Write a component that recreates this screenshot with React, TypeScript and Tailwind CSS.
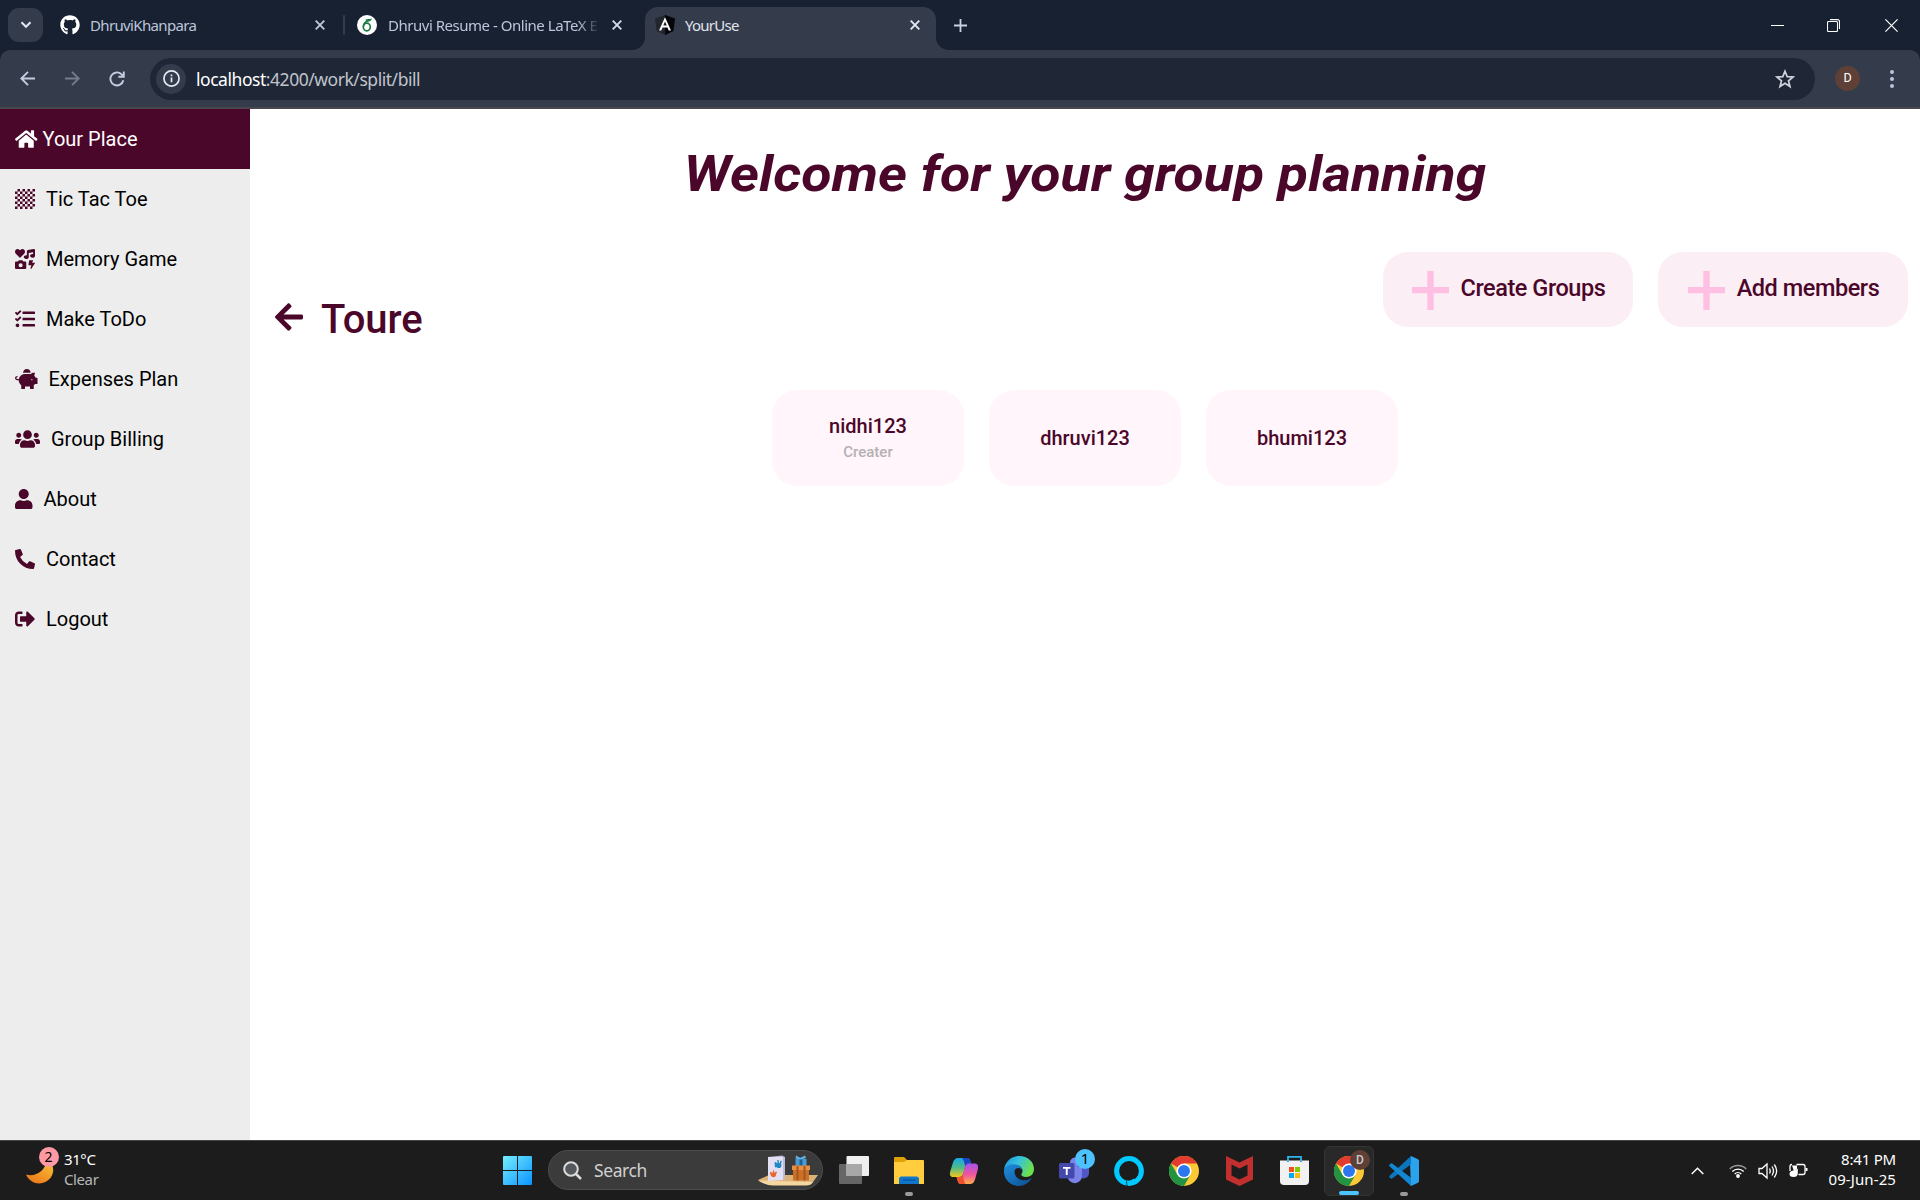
import React from "react";
import {
  FaHome,
  FaGithub,
  FaUsers,
  FaUser,
  FaPhoneAlt,
  FaIcons,
  FaChessBoard,
  FaTasks,
  FaPiggyBank,
  FaArrowLeft,
  FaSignOutAlt,
} from "react-icons/fa";

function Close({ className }: { className: string }) {
  return (
    <svg viewBox="0 0 10 10" className={"h-[10px] w-[10px] shrink-0 " + className} fill="none" stroke="currentColor" strokeWidth="1.9">
      <path d="M0.7 0.7 9.3 9.3M9.3 0.7 0.7 9.3" />
    </svg>
  );
}

function AngularLogo() {
  return (
    <svg viewBox="0 0 20 20" className="ml-[10px] h-5 w-5 shrink-0">
      <path d="M10 0 20 3.4 18.4 16 10 20 1.6 16 0 3.4Z" fill="#24262e" />
      <path d="M10 0 20 3.4 18.4 16 10 20Z" fill="#05060c" />
      <path d="M10 2.3 4 15.6h2.3l1.2-3h5l1.2 3H16ZM8.3 10.6 10 6.6l1.7 4Z" fill="#fff" />
    </svg>
  );
}

function OverleafLogo() {
  return (
    <svg viewBox="0 0 20 20" className="ml-3 h-5 w-5 shrink-0">
      <circle cx="10" cy="10" r="10" fill="#fff" />
      <ellipse cx="9.8" cy="12" rx="3.5" ry="3.8" fill="none" stroke="#1c7a43" strokeWidth="1.7" />
      <path d="M6.3 11.5C6.6 8 9 6 12.5 5.2" fill="none" stroke="#1c7a43" strokeWidth="1.6" />
      <path d="M8.2 4.7C10.5 3.5 13 4.6 15 3.2 14.6 6 12 6.8 9.5 6.2Z" fill="#1c7a43" />
    </svg>
  );
}

function TabStrip() {
  return (
    <div className="flex h-[50px] items-center bg-[#182131] text-[15px] text-[#bcc5da]">
      <div className="ml-2 flex h-[34px] w-[35px] items-center justify-center rounded-[11px] bg-[#343c4c]">
        <svg viewBox="0 0 12 8" className="h-2 w-3" fill="none" stroke="#e4e8f2" strokeWidth="2">
          <path d="M1.5 1.2 6 5.8 10.5 1.2" />
        </svg>
      </div>
      <FaGithub className="ml-[17px] h-5 w-5 shrink-0 text-white" />
      <span className="ml-[10px] w-[225px] whitespace-nowrap tracking-[-0.65px]">DhruviKhanpara</span>
      <Close className="text-[#bcc5da]" />
      <div className="ml-[18px] h-5 w-[2px] rounded bg-[#343c4c]" />
      <OverleafLogo />
      <span className="ml-[11px] w-[210px] whitespace-nowrap tracking-[-0.48px] [mask-image:linear-gradient(to_right,#000_190px,transparent_212px)]">
        Dhruvi Resume - Online LaTeX E
      </span>
      <Close className="ml-[14px] text-[#d5daea]" />
      <div className="relative ml-[23px] mt-[7px] flex h-[43px] w-[291px] items-center rounded-t-[13px] bg-[#343c4c] pb-[7px] text-[#e0e4ee]">
        <svg viewBox="0 0 13 13" className="absolute bottom-0 -left-[13px] h-[13px] w-[13px]"><path d="M13 0V13H0A13 13 0 0 0 13 0Z" fill="#343c4c" /></svg>
        <svg viewBox="0 0 13 13" className="absolute bottom-0 -right-[13px] h-[13px] w-[13px]"><path d="M0 0V13H13A13 13 0 0 1 0 0Z" fill="#343c4c" /></svg>
        <AngularLogo />
        <span className="ml-[10px] w-[225px] whitespace-nowrap tracking-[-0.75px]">YourUse</span>
        <Close className="text-[#e4e8f2]" />
      </div>
      <svg viewBox="0 0 13 13" className="ml-[18px] h-[13px] w-[13px]" stroke="#c8d0e4" strokeWidth="1.8"><path d="M6.5 0V13M0 6.5H13" /></svg>
      <div className="ml-auto flex items-center pr-[22px] text-white">
        <div className="h-px w-[13px] bg-white" />
        <svg viewBox="0 0 13 13" className="ml-[43px] h-[13px] w-[13px]" fill="none" stroke="#fff" strokeWidth="1.1">
          <rect x="0.5" y="2.5" width="10" height="10" rx="1" />
          <path d="M3 0.6H10.5a2 2 0 0 1 2 2V10" />
        </svg>
        <svg viewBox="0 0 13 13" className="ml-[45px] h-[13px] w-[13px]" stroke="#fff" strokeWidth="1.2"><path d="M0.4 0.4 12.6 12.6M12.6 0.4 0.4 12.6" /></svg>
      </div>
    </div>
  );
}

function Toolbar() {
  return (
    <div className="bg-[#182131]">
      <div className="flex h-[59px] items-center rounded-t-[10px] border-b-2 border-[#4a464e] bg-[#343c4c] text-[#c3cce0]">
        <svg viewBox="0 0 15 15" className="ml-5 h-[15px] w-[15px]" fill="none" stroke="currentColor" strokeWidth="1.9"><path d="M15 7.5H1.5M8 0.8 1.3 7.5 8 14.2" /></svg>
        <svg viewBox="0 0 15 15" className="ml-[30px] h-[15px] w-[15px] text-[#757d8d]" fill="none" stroke="currentColor" strokeWidth="1.9"><path d="M0 7.5H13.5M7 0.8 13.7 7.5 7 14.2" /></svg>
        <svg viewBox="0 0 16 16" className="ml-[29px] h-4 w-4" fill="none" stroke="currentColor" strokeWidth="1.9"><path d="M14.3 9.2A6.5 6.5 0 1 1 12.6 3.4L14 5M14.8 0.5V5.8H9.4" /></svg>
        <div className="ml-[25px] flex h-[42px] w-[1665px] items-center rounded-full bg-[#1f2737]">
          <div className="ml-[6px] flex h-[30px] w-[30px] items-center justify-center rounded-full bg-[#343c4c]">
            <svg viewBox="0 0 18 18" className="h-[17px] w-[17px]" fill="none" stroke="#e4e8f2" strokeWidth="1.8"><circle cx="9" cy="9" r="8" /><path d="M9 8V13M9 4.7V6.5" /></svg>
          </div>
          <div className="ml-[10px] whitespace-nowrap pt-[2px] text-[17.5px] tracking-[-0.46px] text-[#c0c4cb]"><span className="text-white">localhost</span>:4200/work/split/bill</div>
          <svg viewBox="0 0 20 20" className="ml-auto mr-5 h-5 w-5" fill="none" stroke="#cfd3dd" strokeWidth="1.7"><path d="M10 2.2 12.2 7.6 18 8 13.5 11.8 15 17.5 10 14.3 5 17.5 6.5 11.8 2 8 7.8 7.6Z" /></svg>
        </div>
        <div className="ml-5 flex h-[25px] w-[25px] items-center justify-center rounded-full bg-[#5e4037] font-[Roboto] text-[12.5px] text-white">D</div>
        <div className="ml-[30px] flex flex-col gap-[3px]">
          <i className="h-1 w-1 rounded-full bg-[#b9c4de]" />
          <i className="h-1 w-1 rounded-full bg-[#b9c4de]" />
          <i className="h-1 w-1 rounded-full bg-[#b9c4de]" />
        </div>
      </div>
    </div>
  );
}

const menu = [
  { label: "Tic Tac Toe", Icon: FaChessBoard, size: "w-5" },
  { label: "Memory Game", Icon: FaIcons, size: "w-5" },
  { label: "Make ToDo", Icon: FaTasks, size: "w-5" },
  { label: "Expenses Plan", Icon: FaPiggyBank, size: "w-[22.5px]" },
  { label: "Group Billing", Icon: FaUsers, size: "w-[25px]" },
  { label: "About", Icon: FaUser, size: "w-[17.5px]" },
  { label: "Contact", Icon: FaPhoneAlt, size: "w-5" },
  { label: "Logout", Icon: FaSignOutAlt, size: "w-5" },
];

function Sidebar() {
  return (
    <nav className="w-[250px] shrink-0 bg-[#ededed] text-[20px] text-black">
      <div className="flex h-[60px] items-center bg-[#4b0729] pl-[15px] text-white">
        <FaHome className="h-5 w-[22.5px]" />
        <span className="ml-[5px]">Your Place</span>
      </div>
      {menu.map(({ label, Icon, size }) => (
        <div key={label} className="flex h-[60px] items-center pl-[15px]">
          <Icon className={"h-5 shrink-0 text-[#4b0729] " + size} />
          <span className="ml-[11px]">{label}</span>
        </div>
      ))}
    </nav>
  );
}

function ActionButton({ label }: { label: string }) {
  return (
    <button className="flex h-[75px] w-[250px] items-center justify-center rounded-[25px] bg-[#fceef5] pl-px text-[#4b0729]">
      <svg viewBox="0 0 37 39" className="mt-[2px] h-[39px] w-[37px] shrink-0" fill="#ffbfe2"><path d="M15.3 0h6.4v39h-6.4zM0 16h37v6.2H0z" /></svg>
      <span className="ml-3 whitespace-nowrap pb-px text-[23.5px] font-medium tracking-[-0.45px]">{label}</span>
    </button>
  );
}

function Member({ name, role }: { name: string; role?: string }) {
  return (
    <div className="flex h-24 w-48 flex-col items-center justify-center rounded-[25px] bg-[#fff5fb]">
      <span className="text-[20px] leading-[24px] font-medium text-[#4b0729]">{name}</span>
      {role && <span className="mt-[5px] mb-[2px] text-[15px] leading-[18px] font-medium text-[#b5b0b3]">{role}</span>}
    </div>
  );
}

function Content() {
  return (
    <main className="flex flex-1 flex-col bg-white">
      <h1 className="mt-[35px] flex h-[60px] scale-x-[1.108] items-center justify-center whitespace-nowrap font-[Roboto] text-[50px] font-bold text-[#4b0729] italic">
        Welcome for your group planning
      </h1>
      <div className="mt-12 flex justify-end gap-[25px] pr-3">
        <div className="mr-auto ml-[25px] flex h-[47px] items-center self-end text-[#4b0729] -mb-[14px]">
          <FaArrowLeft className="mb-[2px] h-8 w-7" />
          <h2 className="ml-[18px] pt-[4px] text-[40px] font-medium">Toure</h2>
        </div>
        <ActionButton label="Create Groups" />
        <ActionButton label="Add members" />
      </div>
      <div className="mt-[63px] flex justify-center gap-[25px]">
        <Member name="nidhi123" role="Creater" />
        <Member name="dhruvi123" />
        <Member name="bhumi123" />
      </div>
    </main>
  );
}

function Chrome() {
  return (
    <svg viewBox="0 0 30 30" className="h-[30px] w-[30px]">
      <circle cx="15" cy="15" r="15" fill="#fcc934" />
      <path d="M15 15 L2 7.5 A15 15 0 0 1 28 7.5 L15 7.5Z" fill="#e33b2e" />
      <path d="M2 7.5 A15 15 0 0 0 15 30 L21.5 18.8 8.5 18.8Z" fill="#229342" />
      <circle cx="15" cy="15" r="7.6" fill="#fff" />
      <circle cx="15" cy="15" r="6" fill="#2b78ee" />
    </svg>
  );
}

function Copilot() {
  return (
    <svg viewBox="0 0 30 26" className="h-[26px] w-[30px]">
      <defs>
        <linearGradient id="cpa" x1="0" y1="0" x2="0" y2="1"><stop offset="0" stopColor="#18a8e8" /><stop offset=".5" stopColor="#4cbb8a" /><stop offset="1" stopColor="#f4c51c" /></linearGradient>
        <linearGradient id="cpb" x1="0" y1="0" x2="0" y2="1"><stop offset="0" stopColor="#a553ee" /><stop offset=".55" stopColor="#f0569b" /><stop offset="1" stopColor="#ffb04a" /></linearGradient>
      </defs>
      <path d="M9 0H18C20 0 21 1.5 21.6 4L22 5.500H19C17 5.500 16.500 7 16 9L14.500 15C13.800 17.800 12.500 19 10 19H4C1 19 .5 16.500 1.200 13.500L4 4.500C5 1.500 6.500 0 9 0Z" fill="url(#cpa)" />
      <path d="M13 0H18.500C20.500 0 21.300 2 22 5.500H19.500C17.500 5.500 16.800 6.500 16.200 8.500C15.500 4 14.500 1.500 13 0Z" fill="#1b45c8" />
      <path d="M21 26H12C10 26 9 24.500 8.400 22L7.500 19H11C13 19 13.500 18 14 16L15.600 10C16.300 7 17.500 5.500 20 5.500H26C29 5.500 29.500 8.500 28.800 11.500L26 21.500C25 24.500 23.500 26 21 26Z" fill="url(#cpb)" />
      <path d="M12 26C10 26 9 24.500 8.400 22L7.500 19H11C13 19 13.500 18 14 16C14.500 21 15 24 16.500 26Z" fill="#f0502d" />
    </svg>
  );
}

function Edge() {
  return (
    <svg viewBox="0 0 30 30" className="h-[30px] w-[30px]">
      <defs>
        <linearGradient id="eda" x1="0" y1="0" x2="1" y2=".4"><stop offset="0" stopColor="#1d93dc" /><stop offset=".5" stopColor="#35c1e0" /><stop offset="1" stopColor="#6be04f" /></linearGradient>
        <linearGradient id="edb" x1="0" y1="0" x2="1" y2="1"><stop offset="0" stopColor="#1f8fdf" /><stop offset="1" stopColor="#0c4c8f" /></linearGradient>
      </defs>
      <path d="M0 14C1 5 8 0 15 0 24 0 30 6 30 13 30 18 26.500 21 22 21 19 21 17.300 19.800 17.300 18.600 17.300 17.800 18.500 17 18.500 14.800 18.500 12 15.500 9 11 9 5 9 .5 12 0 14Z" fill="url(#eda)" />
      <path d="M0 14.500C.5 11 4.500 8.300 9.500 8.300 15 8.300 18.500 11.500 18.500 14.800 17.500 12.500 15 11.500 12.500 12.500 9.500 13.800 10 19 13.500 22 17.500 25.300 23 25 28 21.800 25 27 20 30 15 30 6.500 30-.5 23 0 14.500Z" fill="url(#edb)" />
    </svg>
  );
}

function Teams() {
  return (
    <svg viewBox="0 0 30 27" className="h-[27px] w-[30px]">
      <circle cx="25.500" cy="7" r="4" fill="#5059c9" />
      <path d="M20 9.500H30V16.500A5.500 5.500 0 0 1 20 19Z" fill="#4e57c4" />
      <circle cx="16" cy="5.500" r="5" fill="#7b83eb" />
      <path d="M8.500 9.500H23V19A7.200 7.200 0 0 1 8.500 19Z" fill="#7b83eb" />
      <rect x="0" y="6" width="15.500" height="15.500" rx="1.500" fill="#4449ac" />
      <path d="M4 10H11.500V11.800H8.700V18H6.800V11.800H4Z" fill="#fff" />
    </svg>
  );
}

function VSCode() {
  return (
    <svg viewBox="0 0 30 30" className="h-[30px] w-[30px]">
      <path d="M22 0 29 3.300Q30 4 30 5V25Q30 26 29 26.700L22 30 21 7Z" fill="#2ba3ec" />
      <path d="M22 0V8.300L3.200 22.500Q2.500 23 1.800 22.500L.5 21.200Q-.2 20.500.5 19.700Z" fill="#0b76bd" />
      <path d="M22 30V21.700L3.200 7.500Q2.500 7 1.800 7.500L.5 8.800Q-.2 9.500.5 10.300Z" fill="#1487d2" />
    </svg>
  );
}

function Slot({ children, active, dot }: { children: React.ReactNode; active?: boolean; dot?: string }) {
  return (
    <div className={"relative flex h-[50px] w-[50px] items-center justify-center rounded-[6px] " + (active ? "border border-[#343434] bg-[#292929]" : "")}>
      {children}
      {dot && <i className={"absolute bottom-0 h-1 rounded-full " + dot} />}
    </div>
  );
}

function SearchBox() {
  return (
    <div className="mb-px ml-4 flex h-10 w-[275px] items-center rounded-full border border-[#4d4d4d] bg-[#3b3b3b]">
      <svg viewBox="0 0 19 19" className="ml-[14px] h-[19px] w-[19px]" fill="#55585c" stroke="#dcdcdc" strokeWidth="2"><circle cx="8" cy="8" r="6.800" /><path d="M13 13 18 18" strokeWidth="2.500" /></svg>
      <span className="ml-3 text-[17.500px] tracking-[-0.4px] text-[#d0d0d0]">Search</span>
      <svg viewBox="0 0 60 31" className="mr-[4px] ml-auto h-[31px] w-[60px]">
        <path d="M0 25 11 20H60L55 27Q53 30 48 30H15Q8 30 0 25Z" fill="#dcb277" />
        <path d="M0 25.500Q8 30.500 15 30.500H48Q53 30.500 55 27Z" fill="#f3d6a0" />
        <path d="M10 2 24 .5 27 2V25H10Z" fill="#b9bcd8" />
        <path d="M10 2H25V25L10 26Z" fill="#e3e0f3" />
        <g fill="#2289c4"><circle cx="20.800" cy="10.500" r="2.600" /><path d="M16.500 7.500 17.800 7 19.500 9 19.300 5H20.600L21.200 9 22.700 5.500 23.800 6 22.700 11 17 12.500Z" /></g>
        <g fill="#e9662f"><circle cx="15.500" cy="20" r="2.300" /><path d="M11.800 17.500 13 16.800 14.500 18.500 15 15.500H16.200L16.500 18 18.200 16.500 19 17.300 17.300 21H13Z" /></g>
        <path d="M37.500 4H48.500V11H37.500Z" fill="#4a9bd2" />
        <path d="M41.500 2H44.500V11H41.500Z" fill="#1f5f9a" />
        <path d="M38 .5 42.500 3 47 .5 48 3 43 4.500 37.500 3.500Z" fill="#64b5e6" />
        <path d="M35 12H51V25.500H35Z" fill="#cb7028" />
        <path d="M34 10.500H52V15H34Z" fill="#ea8f42" />
        <path d="M38.500 11H40.500V25.500H38.500ZM45.500 11H47.500V25.500H45.500Z" fill="#a5561c" />
      </svg>
    </div>
  );
}

function Taskbar() {
  return (
    <div className="flex h-[60px] items-center border-t border-[#454545] bg-[#1c1c1c] text-white">
      <div className="relative ml-[26px] flex h-[60px] w-[477px] items-center">
        <svg viewBox="0 0 28 28" className="h-7 w-7">
          <defs><linearGradient id="moon" x1="1" y1="0" x2=".4" y2="1"><stop offset="0" stopColor="#fbc93c" /><stop offset="1" stopColor="#ee7d1c" /></linearGradient></defs>
          <path d="M21 2C28 7 29 15 24.500 21 18 29 5 28.500 0 17.500 9 20.500 20 14 21 2Z" fill="url(#moon)" />
        </svg>
        <div className="absolute top-[6px] left-[12.500px] flex h-5 w-5 items-center justify-center rounded-full bg-[#ff99a4] text-[14px] text-black">2</div>
        <div className="mb-[4px] ml-[10px] text-[15px] leading-5 tracking-[-0.4px]">
          <div>31°C</div>
          <div className="text-[#b8b8b8]">Clear</div>
        </div>
      </div>
      <svg viewBox="0 0 29 29" className="h-[29px] w-[29px]">
        <defs><linearGradient id="win" x1="0" y1="0" x2="1" y2="1"><stop offset="0" stopColor="#74eeff" /><stop offset="1" stopColor="#0a93ff" /></linearGradient></defs>
        <path d="M1 0H14V14H0V1Q0 0 1 0ZM15 0H28Q29 0 29 1V14H15ZM0 15H14V29H1Q0 29 0 28ZM15 15H29V28Q29 29 28 29H15Z" fill="url(#win)" />
      </svg>
      <SearchBox />
      <div className="ml-[6px] flex gap-[5px]">
        <Slot>
          <svg viewBox="0 0 30 28" className="mb-px h-7 w-[30px]">
            <rect x="0" y="8" width="23" height="20" rx="1" fill="#666" />
            <rect x="7.500" y="0" width="22.500" height="20" rx="1" fill="#f0f0f0" />
            <rect x="7.500" y="8" width="15.500" height="12" fill="#a8a8a8" />
          </svg>
        </Slot>
        <Slot dot="w-2 bg-[#9a9a9a]">
          <svg viewBox="0 0 30 27" className="h-[27px] w-[30px]">
            <path d="M0 1Q0 0 1 0H10L13 3V9H0Z" fill="#e0a106" />
            <path d="M0 5H10L13 3H29Q30 3 30 4V27H0Z" fill="#ffcd3e" />
            <path d="M5 27V22Q5 19.500 7.500 19.500H22.500Q25 19.500 25 22V27Z" fill="#0f76c9" />
            <path d="M8.500 22.500H21.500V23.500H8.500Z" fill="#0a4d93" />
          </svg>
        </Slot>
        <Slot><Copilot /></Slot>
        <Slot><Edge /></Slot>
        <Slot>
          <Teams />
          <div className="absolute top-[3px] left-[26px] flex h-5 w-5 items-center justify-center rounded-full bg-[#4cc2ff] text-[15px] text-black">1</div>
        </Slot>
        <Slot>
          <svg viewBox="0 0 30 30" className="h-[30px] w-[30px]">
            <circle cx="15" cy="15" r="12.400" fill="none" stroke="#00caff" strokeWidth="5" />
            <path d="M12.700 24.500V27.500Q12.700 29 13.500 30" fill="none" stroke="#1c1c1c" strokeWidth="0.900" />
            <path d="M12.700 24.600C15.500 25.300 18 24 20 22.500L21 26 14 28.500Z" fill="#00caff" />
          </svg>
        </Slot>
        <Slot><Chrome /></Slot>
        <Slot>
          <svg viewBox="0 0 27 30" className="h-[30px] w-[27px]"><path d="M0 0 13.500 6.500 27 0V23.500L13.500 30 0 23.500ZM5.500 8.500V19.500L13.500 23.500 21.500 19.500V8.500L13.500 12.500Z" fill="#c12f2f" fillRule="evenodd" /></svg>
        </Slot>
        <Slot>
          <svg viewBox="0 0 29 29" className="h-[29px] w-[29px]">
            <path d="M8 7V.9H21V7" fill="none" stroke="#30b2ee" strokeWidth="1.800" />
            <path d="M0 4.500H29V25Q29 29 25 29H4Q0 29 0 25Z" fill="#f1f1f1" />
            <path d="M8 4.500V6M21 4.500V6" stroke="#1f9ede" strokeWidth="1.800" />
            <rect x="9" y="11" width="5" height="5" fill="#f1511b" /><rect x="15" y="11" width="5" height="5" fill="#80cc00" />
            <rect x="9" y="17" width="5" height="5" fill="#00adef" /><rect x="15" y="17" width="5" height="5" fill="#fbbc09" />
          </svg>
        </Slot>
        <Slot active dot="w-5 bg-[#4cc2ff]">
          <Chrome />
          <div className="absolute top-[3px] left-[25px] flex h-5 w-5 items-center justify-center rounded-full bg-[#5e4037] font-[Roboto] text-[12px] font-medium text-[#ccc]">D</div>
        </Slot>
        <Slot dot="w-2 bg-[#9a9a9a]"><VSCode /></Slot>
      </div>
      <div className="ml-auto flex items-center pr-6">
        <svg viewBox="0 0 13 8" className="h-2 w-[13px]" fill="none" stroke="#fff" strokeWidth="1.500"><path d="M.7 7 6.500 1.200 12.300 7" /></svg>
        <svg viewBox="0 0 18 14" className="ml-[25px] h-[14px] w-[18px]" fill="none" stroke="#fff" strokeWidth="1.400">
          <path d="M.8 5A11.500 11.500 0 0 1 17.200 5" stroke="#999" /><path d="M3.300 7.500A8 8 0 0 1 14.700 7.500M5.700 10A4.700 4.700 0 0 1 12.300 10" /><circle cx="9" cy="12" r="1.200" fill="#fff" />
        </svg>
        <svg viewBox="0 0 20 18" className="ml-[11px] h-[18px] w-5" fill="none" stroke="#fff" strokeWidth="1.300">
          <path d="M1 6.500H4L9 2V16L4 11.500H1Z" /><path d="M11.500 6.500Q13 9 11.500 11.500M14 4.500Q17 9 14 13.500M16.300 2.500Q21 9 16.300 15.500" />
        </svg>
        <svg viewBox="0 0 20 18" className="mb-[3px] ml-[10px] h-[18px] w-5" fill="none" stroke="#fff" strokeWidth="1.300">
          <path d="M8.500 4.500H15Q17 4.500 17 6.500V12.500Q17 14.500 15 14.500H10.500" />
          <path d="M2 11V6.500Q2 4.500 4 4.500" />
          <path d="M18.500 8V11" strokeWidth="2" />
          <path d="M4 5.500H9V9L6 11Z" fill="#fff" stroke="none" />
          <path d="M9.800 8.500V13.500Q9.500 17 5.500 17 1.500 17 1.500 14 1.500 11 5 10.500 8.500 10.200 9.800 8.500Z" fill="#fff" stroke="none" />
        </svg>
        <div className="mb-[4px] ml-[12px] w-[76px] text-right text-[15px] leading-5 whitespace-nowrap">
          <div className="tracking-[-0.2px]">8:41 PM</div>
          <div className="tracking-[0.1px]">09-Jun-25</div>
        </div>
      </div>
    </div>
  );
}

export default function App() {
  return (
    <div className="flex h-[1200px] w-[1920px] flex-col overflow-hidden font-['Noto_Sans',sans-serif]">
      <TabStrip />
      <Toolbar />
      <div className="flex flex-1 font-[Roboto,sans-serif]">
        <Sidebar />
        <Content />
      </div>
      <Taskbar />
    </div>
  );
}
